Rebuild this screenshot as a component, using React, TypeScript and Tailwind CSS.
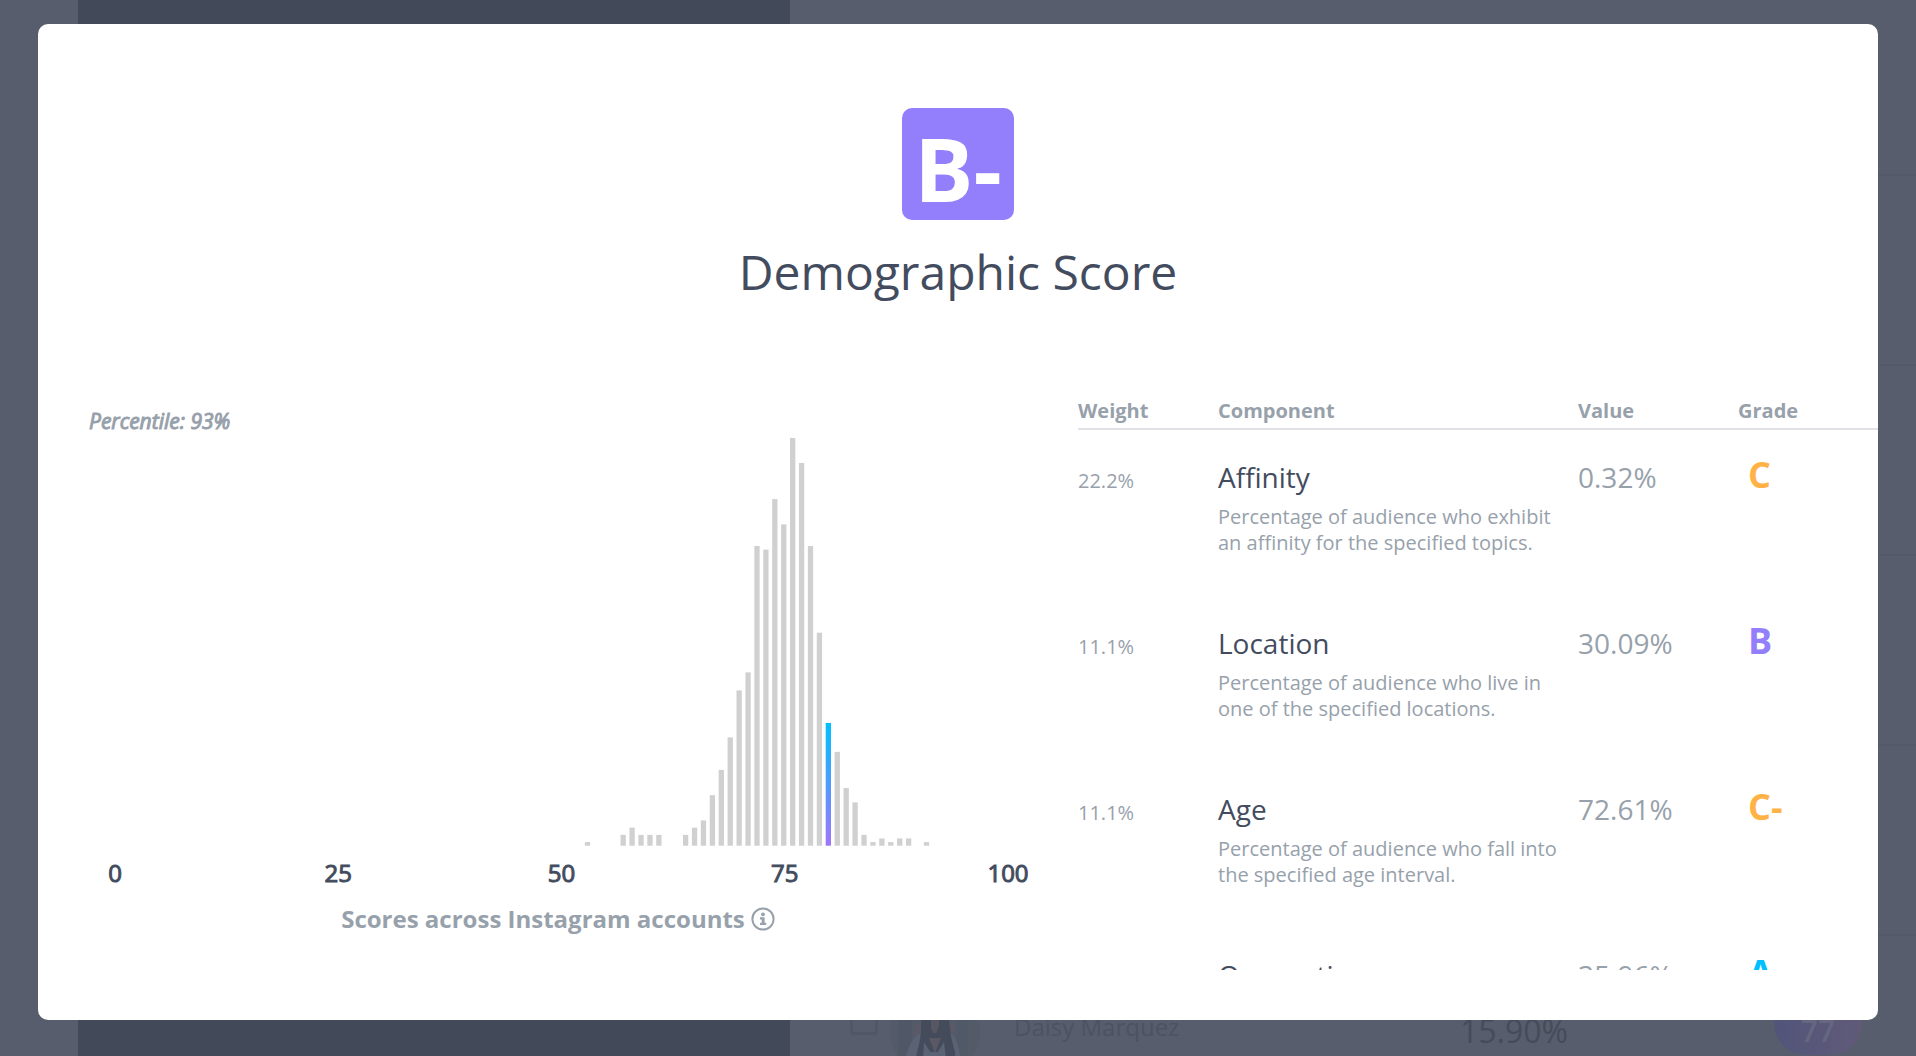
const AXIS_TICKS = [0, 25, 50, 75, 100];
const ACCOUNT_SCORE = 80;

// [score, number of accounts]
const HISTOGRAM: [number, number][] = [
  [53, 1], [57, 3], [58, 5], [59, 3], [60, 3], [61, 3], [64, 3], [65, 5],
  [66, 7], [67, 14], [68, 21], [69, 30], [70, 43], [71, 48], [72, 83],
  [73, 82], [74, 96], [75, 89], [76, 113], [77, 106], [78, 83], [79, 59],
  [80, 34], [81, 26], [82, 16], [83, 12], [84, 3], [85, 1], [86, 2], [87, 1],
  [88, 2], [89, 2], [91, 1],
];

const COMPONENTS = [
  {
    weight: "22.2%",
    name: "Affinity",
    description: "Percentage of audience who exhibit an affinity for the specified topics.",
    value: "0.32%",
    grade: "C",
    color: "text-[#ffb347]",
  },
  {
    weight: "11.1%",
    name: "Location",
    description: "Percentage of audience who live in one of the specified locations.",
    value: "30.09%",
    grade: "B",
    color: "text-[#937efc]",
  },
  {
    weight: "11.1%",
    name: "Age",
    description: "Percentage of audience who fall into the specified age interval.",
    value: "72.61%",
    grade: "C-",
    color: "text-[#ffb347]",
  },
  {
    weight: "11.1%",
    name: "Occupation",
    description: "Percentage of audience who work in the specified occupations.",
    value: "35.96%",
    grade: "A",
    color: "text-[#00c0ff]",
  },
];

function Histogram() {
  const unit = 408 / 113;
  return (
    <svg viewBox="0 0 960 408" className="block w-full" role="img" aria-label="Score distribution">
      <defs>
        <linearGradient id="score" x1="0" y1="0" x2="0" y2="1">
          <stop offset="0%" stopColor="#00c0ff" />
          <stop offset="100%" stopColor="#a076fb" />
        </linearGradient>
      </defs>
      {HISTOGRAM.map(([score, count]) => (
        <rect
          key={score}
          x={34.1 + score * 8.92}
          y={407.7 - count * unit}
          width={5.3}
          height={count * unit}
          fill={score === ACCOUNT_SCORE ? "url(#score)" : "#d0d0d0"}
        />
      ))}
    </svg>
  );
}

function Avatar() {
  return (
    <svg viewBox="0 0 90 90" className="size-[90px] rounded-full">
      <rect width="90" height="90" fill="#535b69" />
      <rect x="8" width="14" height="90" fill="#505867" />
      <rect x="66" width="12" height="90" fill="#505968" />
      <path d="M12 90 Q18 50 32 46 H58 Q70 48 72 90Z" fill="#5a6374" />
      <path d="M23 52 L25 39 L31 37 L32 46Z M60 37 L66 39 L68 49 L61 46Z" fill="#5b5967" />
      <path d="M31 34 Q32 8 45 8 Q58 8 59 34 Q60 50 65 66 Q66 84 58 90 L53 66 L38 66 L34 90 Q23 84 27 66 Q32 50 31 34Z" fill="#444c5c" />
      <path d="M41 26 H49 V40 L46 47 H43 L41 42Z" fill="#575663" />
      <path d="M34 56 L44 72 L54 56 L58 90 H32Z" fill="#5a6374" />
      <path d="M39 52 H51 L45 67Z" fill="#5a5864" />
    </svg>
  );
}

function Backdrop() {
  return (
    <div className="fixed inset-0 flex overflow-hidden bg-[#575d6c]" aria-hidden="true">
      <div className="w-[78px] shrink-0" />
      <aside className="flex w-[712px] shrink-0 flex-col bg-[#424a59] px-[52px] pt-[1050px]">
        <span className="text-[22px] leading-7 font-semibold text-[#535968]">INCOME</span>
      </aside>
      <div className="min-w-0 flex-1">
        <div className="h-44 border-b-2 border-[#535969]" />
        <div className="h-[190px] border-b-2 border-[#535969]" />
        <div className="h-[190px] border-b-2 border-[#535969]" />
        <div className="h-[190px] border-b-2 border-[#535969]" />
        <div className="h-[190px] border-b-2 border-[#535969]" />
        <div className="flex h-[190px] items-center pr-[54px] pl-[60px]">
          <span className="mb-5 size-7 rounded-sm border-[3px] border-[#505766]" />
          <span className="ml-3">
            <Avatar />
          </span>
          <span className="mb-2 ml-[34px] flex-1 text-2xl text-[#4b5363]">Daisy Marquez</span>
          <span className="w-[314px] text-[32px] leading-10 text-[#444c5b]">15.90%</span>
          <span className="mb-4 flex h-16 w-[88px] items-center justify-center rounded-full bg-linear-to-r from-[#51557a] to-[#605a78] pt-4 text-3xl font-semibold text-[#64677f]">
            77
          </span>
        </div>
      </div>
    </div>
  );
}

function ScoreTable() {
  return (
    <table className="w-full table-fixed border-separate border-spacing-0 text-left text-xl text-[#97a1ab]">
      <thead>
        <tr className="leading-7">
          <th className="w-[17.5%] border-b-2 border-[#e1e1e8] pt-[7px] pb-[3px] font-bold">Weight</th>
          <th className="w-[45%] border-b-2 border-[#e1e1e8] pt-[7px] pb-[3px] font-bold">Component</th>
          <th className="w-1/5 border-b-2 border-[#e1e1e8] pt-[7px] pb-[3px] font-bold">Value</th>
          <th className="w-[17.5%] border-b-2 border-[#e1e1e8] pt-[7px] pb-[3px] font-bold">Grade</th>
        </tr>
      </thead>
      <tbody>
        {COMPONENTS.map((item) => (
          <tr key={item.name} className="h-[166px] align-baseline">
            <td className="pt-[26px]">{item.weight}</td>
            <td className="pt-[26px] pr-4">
              <h2 className="text-[28px] leading-[38px] text-[#434c5e]">{item.name}</h2>
              <p className="mt-2 leading-[26px]">{item.description}</p>
            </td>
            <td className="pt-[26px] text-[28px] leading-[38px]">{item.value}</td>
            <td className={`pt-[26px] pl-2.5 text-4xl leading-[38px] font-bold ${item.color}`}>
              {item.grade}
            </td>
          </tr>
        ))}
      </tbody>
    </table>
  );
}

export default function App() {
  return (
    <div className="font-['Open_Sans',sans-serif]">
      <Backdrop />
      <div className="fixed inset-0 flex px-[38px] pt-6 pb-9">
        <main
          role="dialog"
          aria-labelledby="score-title"
          className="flex min-w-0 flex-1 flex-col overflow-hidden rounded-[10px] bg-white pt-[84px] pb-[50px]"
        >
          <header className="flex flex-col items-center">
            <div className="size-28 rounded-[10px] bg-[#937efc] text-center text-[88px] leading-[120px] font-bold text-white">
              B-
            </div>
            <h1 id="score-title" className="mt-5 text-5xl leading-[64px] text-[#434c5e]">
              Demographic Score
            </h1>
          </header>

          <div className="mt-[86px] grid min-h-0 flex-1 grid-cols-[6fr_5fr] gap-10 pl-10">
            <section className="min-w-0 pt-[17px]">
              <p className="pl-[11px] text-[21px] leading-7 text-[#97a1ab] italic [-webkit-text-stroke-width:1px]">
                Percentile: 93%
              </p>
              <div className="mt-[3px]">
                <Histogram />
              </div>
              <div className="mt-[11px] flex justify-between pr-1.5 pl-[13px] text-2xl leading-8 text-[#434c5e] [-webkit-text-stroke-width:1px]">
                {AXIS_TICKS.map((tick) => (
                  <span key={tick} className="w-12 text-center">
                    {tick}
                  </span>
                ))}
              </div>
              <div className="mt-3.5 flex items-center justify-center gap-1.5 text-2xl leading-8 font-bold text-[#97a1ab]">
                Scores across Instagram accounts
                <button type="button" aria-label="About this chart">
                  <svg viewBox="0 0 24 24" className="size-6" fill="currentColor">
                    <circle cx="12" cy="12" r="10.6" fill="none" stroke="currentColor" strokeWidth="2" />
                    <circle cx="12" cy="7.3" r="1.9" />
                    <path d="M9 10.2h4.6v5.6h1.6v2.2H9v-2.2h1.7v-3.4H9z" />
                  </svg>
                </button>
              </div>
            </section>

            <section className="min-h-0 overflow-y-auto [scrollbar-width:none]">
              <ScoreTable />
            </section>
          </div>
        </main>
      </div>
    </div>
  );
}
